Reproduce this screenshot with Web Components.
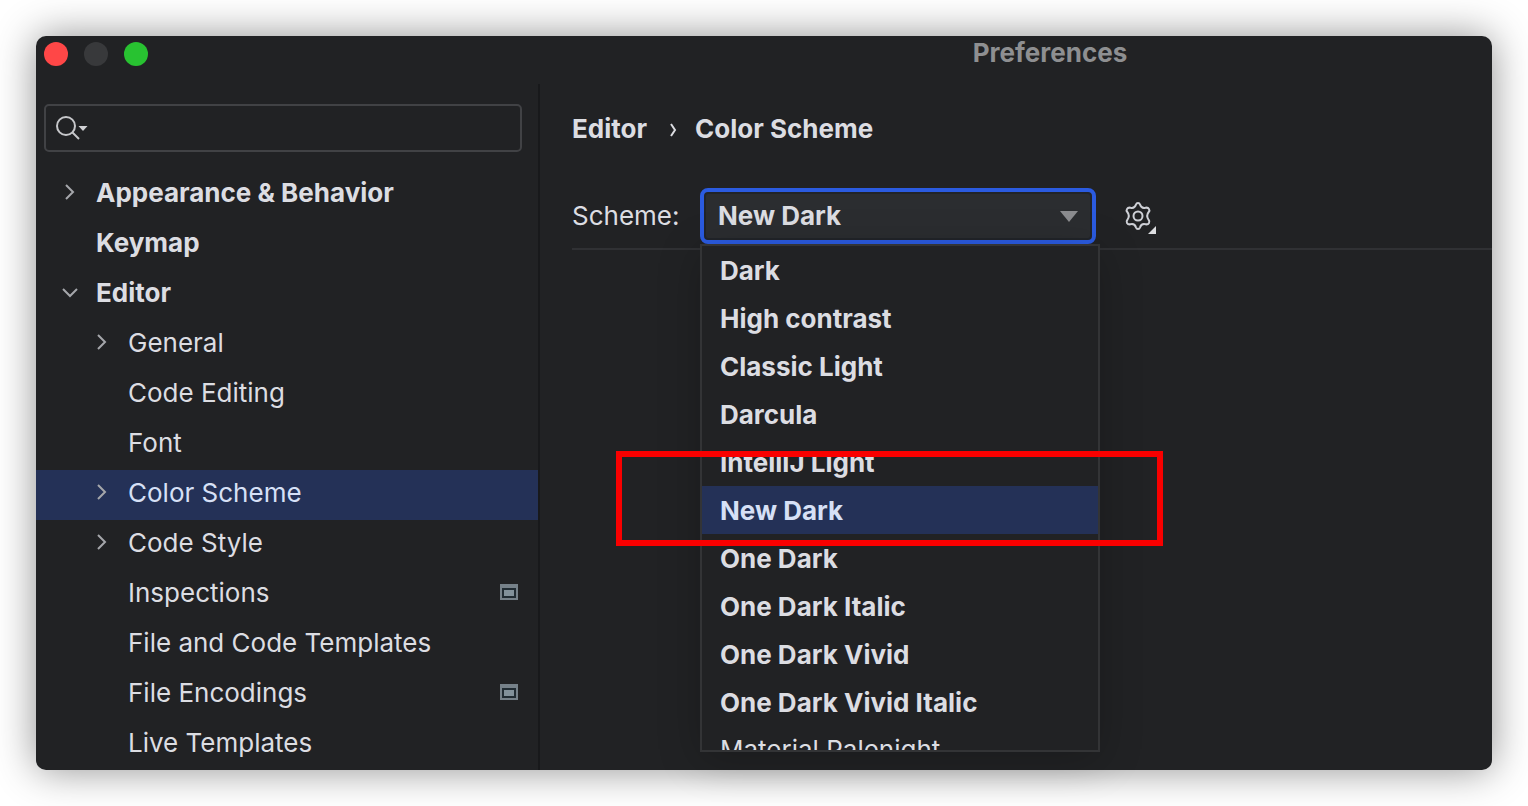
<!DOCTYPE html>
<html lang="en">
<head>
<meta charset="utf-8">
<title>Preferences</title>
<style>
  body { margin: 0; padding: 36px; background: #fff; font: 26px/32px Inter, "Liberation Sans", sans-serif; color: #dcdde2; }
</style>
</head>
<body>
<prefs-window heading="Preferences">
  <prefs-sidebar slot="sidebar">
    <tree-item strong arrow="closed">Appearance &amp; Behavior</tree-item>
    <tree-item strong>Keymap</tree-item>
    <tree-item strong arrow="open">Editor</tree-item>
    <tree-item level="1" arrow="closed">General</tree-item>
    <tree-item level="1">Code Editing</tree-item>
    <tree-item level="1">Font</tree-item>
    <tree-item level="1" arrow="closed" selected>Color Scheme</tree-item>
    <tree-item level="1" arrow="closed">Code Style</tree-item>
    <tree-item level="1" project>Inspections</tree-item>
    <tree-item level="1">File and Code Templates</tree-item>
    <tree-item level="1" project>File Encodings</tree-item>
    <tree-item level="1">Live Templates</tree-item>
  </prefs-sidebar>
  <scheme-panel></scheme-panel>
</prefs-window>

<script>
class BaseElement extends HTMLElement {
  constructor() {
    super();
    this.attachShadow({ mode: 'open' });
  }
  connectedCallback() {
    this.shadowRoot.innerHTML = this.render();
  }
}

customElements.define('prefs-window', class extends BaseElement {
  render() {
    return `<style>
      :host { display: block; background: #212224; border-radius: 10px; box-shadow: 0 0 40px rgba(0,0,0,.44); }
      header { display: grid; grid-template-columns: 572px 1fr; height: 48px; }
      .lights { display: flex; gap: 16px; padding: 6px 8px; }
      .lights button { width: 24px; height: 24px; padding: 0; border: 0; border-radius: 50%; }
      .close { background: #ff4747; } .min { background: #38393b; } .zoom { background: #28c231; }
      h1 { margin: 0; padding-top: 1px; font-size: 26px; line-height: 32px; font-weight: 700; text-align: center; color: #8e8f91; }
      .body { display: grid; grid-template-columns: 502px 1fr; }
    </style>
    <header>
      <div class="lights">
        <button class="close" aria-label="Close"></button>
        <button class="min" aria-label="Minimize"></button>
        <button class="zoom" aria-label="Zoom"></button>
      </div>
      <h1>${this.getAttribute('heading')}</h1>
    </header>
    <div class="body"><slot name="sidebar"></slot><slot></slot></div>`;
  }
});

customElements.define('prefs-sidebar', class extends BaseElement {
  render() {
    return `<style>
      :host { display: block; padding-top: 20px; }
      .search { display: flex; align-items: center; box-sizing: border-box; height: 48px; margin: 0 16px 18px 8px; padding-left: 8px; border: 2px solid #414245; border-radius: 5px; }
      svg { flex: none; width: 34px; height: 28px; }
      input { flex: 1; min-width: 0; background: none; border: 0; outline: 0; font: inherit; color: inherit; }
    </style>
    <label class="search">
      <svg viewBox="0 0 34 28" fill="none" aria-hidden="true"><circle cx="12" cy="12" r="9" stroke="#c6c7ca" stroke-width="2"/><path d="M18.500 18.500l6.500 6.500" stroke="#c6c7ca" stroke-width="2"/><path d="M24.500 12h9l-4.500 5z" fill="#d0d1d4"/></svg>
      <input type="text" aria-label="Search settings">
    </label>
    <nav><slot></slot></nav>`;
  }
});

customElements.define('tree-item', class extends BaseElement {
  render() {
    const arrow = this.getAttribute('arrow');
    const path = arrow === 'open' ? 'M3 7l7 7 7-7' : 'M6 3l7 7-7 7';
    return `<style>
      :host { display: flex; align-items: center; height: 50px; padding: 0 20px 0 24px; }
      :host([level="1"]) { padding-left: 56px; }
      :host([selected]) { background: #243157; color: #d6e0f6; }
      svg { flex: none; }
      .arrow { width: 20px; height: 20px; margin-right: 16px; padding-bottom: 6px; }
      a { flex: 1; padding-bottom: 4px; color: inherit; text-decoration: none; white-space: nowrap; }
      :host([strong]) a { font-weight: 700; }
      .badge { width: 18px; height: 16px; margin-bottom: 6px; }
    </style>
    <svg class="arrow" viewBox="0 0 20 20" fill="none" aria-hidden="true">${arrow ? `<path d="${path}" stroke="#a5a7ab" stroke-width="2"/>` : ''}</svg>
    <a href="#"><slot></slot></a>
    ${this.hasAttribute('project') ? '<svg class="badge" viewBox="0 0 18 16" aria-hidden="true"><path fill="#768189" d="M0 0h18v16H0z"/><path fill="#212c33" d="M2 4h14v10H2z"/><path fill="#82919a" d="M4 6h10v6H4z"/></svg>' : ''}`;
  }
});

customElements.define('scheme-panel', class extends BaseElement {
  render() {
    return `<style>
      :host { display: block; min-width: 0; padding: 28px 0 0 32px; border-left: 2px solid #18191b; }
      nav { display: flex; align-items: center; height: 34px; font-weight: 700; }
      nav svg { width: 8px; height: 14px; margin: 2px 18px 0 22px; }
      a { color: inherit; text-decoration: none; }
      .row { display: flex; align-items: center; margin-top: 42px; padding-bottom: 4px; border-bottom: 2px solid #303134; }
      .row label { width: 128px; }
      .field { position: relative; width: 396px; height: 56px; }
      select { box-sizing: border-box; width: 100%; height: 100%; appearance: none; padding: 0 14px; border: 4px solid #2b5be0; border-radius: 8px; outline: 0; background: #2b2d30; box-shadow: inset 0 0 0 2px #212429; font: inherit; font-weight: 700; color: inherit; }
      .caret { position: absolute; top: 23px; right: 18px; width: 18px; height: 11px; pointer-events: none; }
      .gear { display: flex; margin-left: 26px; padding: 0; border: 0; background: none; }
      .gear svg { width: 36px; height: 36px; }
      scheme-popup { position: absolute; top: 56px; left: 0; width: 400px; }
    </style>
    <nav aria-label="Breadcrumb">
      <a href="#">Editor</a>
      <svg viewBox="0 0 8 14" fill="none" aria-hidden="true"><path d="M2 1l4 6-4 6" stroke="#dcdde2" stroke-width="2"/></svg>
      <a href="#">Color Scheme</a>
    </nav>
    <div class="row">
      <label for="scheme">Scheme:</label>
      <div class="field">
        <select id="scheme"><option>New Dark</option></select>
        <svg class="caret" viewBox="0 0 18 11" aria-hidden="true"><path d="M0 0h18l-9 11z" fill="#8b8c8f"/></svg>
        <scheme-popup></scheme-popup>
      </div>
      <button class="gear" aria-label="Scheme actions">
        <svg viewBox="0 0 36 36" fill="none" stroke="#ced0d6" aria-hidden="true"><path stroke-width="2" stroke-linejoin="round" d="M14 6.500Q14.500 5 16 5Q17.500 5 18 6.500C19 9.800 20.500 10.500 23.600 9.700Q26 9.300 27 11Q28 12.500 26.700 14C24.600 16.600 24.600 19 26.700 22Q28 23.500 27 25Q26 26.700 23.600 26.300C20.500 25.500 19 26.200 18 29.500Q17.500 31 16 31Q14.500 31 14 29.500C13 26.200 11.500 25.500 8.400 26.300Q6 26.700 5 25Q4 23.500 5.300 22C7.400 19 7.400 16.600 5.300 14Q4 12.500 5 11Q6 9.300 8.400 9.700C11.500 10.500 13 9.800 14 6.500Z"/><circle cx="16" cy="18" r="4.500" stroke-width="2"/><path d="M34 28v8h-8z" fill="#dcdde0" stroke="none"/></svg>
      </button>
    </div>`;
  }
});

customElements.define('scheme-popup', class extends BaseElement {
  render() {
    const names = ['Dark', 'High contrast', 'Classic Light', 'Darcula', 'IntelliJ Light', 'New Dark', 'One Dark', 'One Dark Italic', 'One Dark Vivid', 'One Dark Vivid Italic'];
    const items = names.map(n => `<li role="option" aria-selected="${n === 'New Dark'}">${n}</li>`).join('');
    return `<style>
      :host { display: block; }
      ul { box-sizing: border-box; height: 508px; margin: 0; padding: 0; overflow: hidden; list-style: none; background: #212224; border: 2px solid #333436; box-shadow: 0 8px 40px rgba(0,0,0,.22); }
      li { box-sizing: border-box; height: 48px; padding: 9px 18px 7px; font-weight: 700; white-space: nowrap; }
      li[aria-selected="true"] { background: #243157; color: #d6e0f6; }
      li.plain { padding-top: 8px; font-weight: 400; }
      .marker { position: absolute; top: 207px; left: -84px; right: -63px; height: 95px; box-sizing: border-box; border: 6px solid #f90000; pointer-events: none; }
    </style>
    <ul role="listbox" aria-label="Schemes">${items}<li role="option" class="plain">Material Palenight</li></ul>
    <div class="marker"></div>`;
  }
});
</script>
</body>
</html>
